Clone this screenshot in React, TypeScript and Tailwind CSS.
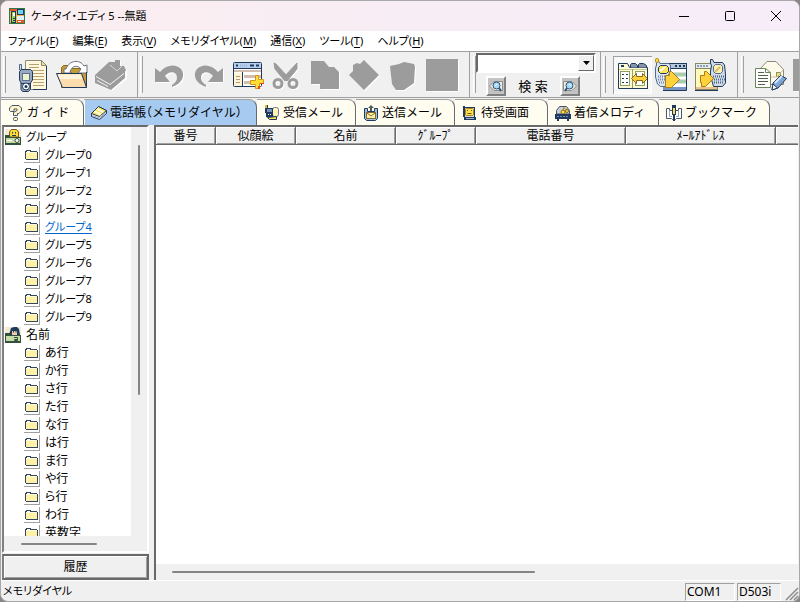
import type { ReactNode } from "react";

const navy = "#1f3a5c";

/* ---------- toolbar icons (39 x 38 canvas) ---------- */

const Tool = ({ children }: { children: ReactNode }) => (
  <svg viewBox="0 0 39 38" className="h-[38px] w-[39px]" aria-hidden="true">
    {children}
  </svg>
);

const PhoneDocIcon = () => (
  <Tool>
    <path d="M12.500 4.500H28.500L33.500 9.500V33.500H12.500Z" fill="#fff8dc" stroke="#8c8c6c" />
    <path d="M28.500 4.500V9.500H33.500Z" fill="#e9dcae" stroke="#8c8c6c" />
    <path d="M33.500 10V33.500H20" fill="none" stroke={navy} />
    <path d="M16 8.500H26M16 11.500H26M18 14.500H31M20 17.500H31M20 20.500H31M20 23.500H31M20 26.500H31M20 29.500H31" stroke="#b8a070" />
    <path d="M6.500 8.500H8.500V14H6.500Z" fill="#d8dce4" stroke="#50698c" />
    <path d="M6.500 15.500L8.500 13.500H17.500L19.500 15.500V24L17.500 27V33.500L15.500 35.500H9.500L8 33.500V27L6.500 24Z" fill="#98a8c0" stroke={navy} />
    <rect x="9.500" y="17.500" width="7" height="7" fill="#eaf4d0" stroke="#60708c" />
    <circle cx="13" cy="30.500" r="3.500" fill="#fff" stroke={navy} />
    <circle cx="13" cy="30.500" r="1.500" fill={navy} />
    <path d="M8 27.500H11M15 27.500H18" stroke={navy} />
  </Tool>
);

const OpenFolderIcon = () => (
  <Tool>
    <path d="M9.500 22V11.500L11.500 9.500H17.500L19.500 12.500H34.500V30.500L32.500 31.500H9.500Z" fill="#c79b35" stroke="#8a6a1c" />
    <path d="M14 13C17 4 28 3 32 10L35 9V17H26L29 13C26 9 20 9 18 16L20 17H12V13Z" fill="#fff" stroke="#6b7380" />
    <path d="M4.500 17.500H29.500L34.500 31.500H10.500Z" fill="#ffdcae" stroke={navy} />
    <path d="M6 18.500H28.500L30 23H8Z" fill="#fff4dc" />
    <path d="M34.500 16V31.500" stroke={navy} />
  </Tool>
);

const BookGrayIcon = () => (
  <Tool>
    <path d="M4 19L18 6H24V4H29V10H33L35 14V22L20 34L4 27Z" fill="#fff" transform="translate(1 1)" />
    <path d="M4 19L18 6H24V4H29V10H33L35 14L34 16V22L20 34L4 27Z" fill="#9c9c9c" />
    <path d="M5 20.500L19 28.500L33 17.500M6 24.500L17 30.500" fill="none" stroke="#f5f5f5" />
    <path d="M19 9L26 15L32 9" fill="none" stroke="#d8d8d8" />
  </Tool>
);

const undoShape = "M5 12L10 16C17 8 26 8 31 13C36 19 32 28 22 31V29C27 26 28 22 26 18C23 15 18 16 15 20L20 26H5Z";

const UndoIcon = () => (
  <Tool>
    <path d={undoShape} fill="#fff" transform="translate(1 1)" />
    <path d={undoShape} fill="#9c9c9c" />
  </Tool>
);

const RedoIcon = () => (
  <Tool>
    <path d={undoShape} fill="#fff" transform="matrix(-1 0 0 1 40 1)" />
    <path d={undoShape} fill="#9c9c9c" transform="matrix(-1 0 0 1 39 0)" />
  </Tool>
);

const AddTableIcon = () => (
  <Tool>
    <rect x="5.500" y="6.500" width="28" height="24" rx="1" fill="#fff" stroke={navy} />
    <rect x="6" y="7" width="27" height="5" fill="#b9cfea" />
    <path d="M8 9.500H10M22 9.500H26M28 9.500H31" stroke={navy} strokeWidth="2" />
    <path d="M12 9.500H20" stroke="#8fb4e0" strokeDasharray="1 1" strokeWidth="2" />
    <path d="M6 12.500H33" stroke={navy} />
    <path d="M6 15H33" stroke="#d3bdae" strokeWidth="2" />
    <rect x="6" y="17" width="8" height="13" fill="#fff3d2" />
    <path d="M14.500 16V30" stroke={navy} />
    <path d="M8 20.500H12M8 23.500H12M8 26.500H12" stroke="#ad9882" />
    <path d="M16 20.500H33M16 26.500H22" stroke="#d3bdae" strokeWidth="3" />
    <path d="M27.500 19.500H30.500V23.500H35.500V27.500H31.500V32.500H27.500V28.500H22.500V24.500H27.500Z" fill="#ffe033" stroke="#d9921a" />
    <path d="M32 27H36V28H32ZM30 30H32V33H30Z" fill="#e84a20" />
  </Tool>
);

const CutIcon = () => (
  <Tool>
    {["#fff", "#9c9c9c"].map((c, i) => (
      <g key={c} transform={i ? undefined : "translate(1 1)"} fill={c} stroke={c}>
        <path d="M7 7L9 8L22 22L18 25L8 13ZM30 7V13L20 25L16 22Z" />
        <circle cx="11" cy="27.500" r="4" fill="none" strokeWidth="3" />
        <circle cx="26" cy="27.500" r="4" fill="none" strokeWidth="3" />
      </g>
    ))}
  </Tool>
);

const CopyIcon = () => (
  <Tool>
    <path d="M5 5H18L23 11H28L33 16V33H14V28H5Z" fill="#fff" transform="translate(1 1)" />
    <path d="M5 5H18L23 11H28L33 16V33H14V28H5Z" fill="#9c9c9c" />
  </Tool>
);

const PasteIcon = () => (
  <Tool>
    <path d="M4 19L8 15V9L12 7L15 8L19 4L34 19L19 34Z" fill="#fff" transform="translate(1 1)" />
    <path d="M4 19L8 15V9L12 7L15 8L19 4L34 19L19 34Z" fill="#9c9c9c" />
  </Tool>
);

const TrashIcon = () => (
  <Tool>
    <path d="M6 10L15 8L20 6L30 8L31 11L30 27L20 34H12L8 28Z" fill="#fff" transform="translate(1 1)" />
    <path d="M6 10L15 8L20 6L30 8L31 11L30 27L20 34H12L8 28Z" fill="#9c9c9c" />
  </Tool>
);

const BlankIcon = () => (
  <Tool>
    <rect x="4" y="4" width="32" height="32" fill="#fff" />
    <rect x="3" y="3" width="32" height="32" fill="#9c9c9c" />
  </Tool>
);

const CompareIcon = () => (
  <Tool>
    <path d="M5.500 7.500H14.500L16.500 11.500H34.500V32.500H5.500Z" fill="#fffbd8" stroke={navy} />
    <path d="M17.500 11.500V8.500L18.500 7.500H22.500L24.500 9.500V11.500M25.500 11.500V8.500L26.500 7.500H30.500L33.500 9.500V11.500" fill="#8794a8" stroke={navy} />
    <path d="M8 10H11" stroke={navy} strokeWidth="2" />
    <path d="M6 13.500H34" stroke="#c6cf90" />
    <path d="M19.500 13V32" stroke="#91a05a" />
    <rect x="7.500" y="15.500" width="9" height="14" fill="#fff" stroke="#91a05a" />
    <path d="M9 18.500H11M13 18.500H15M9 22.500H11M13 22.500H15M9 26.500H11M13 26.500H15" stroke={navy} />
    <rect x="22.500" y="15.500" width="9" height="14" fill="#fff" stroke="#91a05a" />
    <path d="M18.500 22.500L23.500 17.500V20.500H29.500V17.500L34.500 22.500L29.500 27.500V24.500H23.500V27.500Z" fill="#ffd23c" stroke="#8c6818" />
    <path d="M6 32.500H34.500V14" fill="none" stroke={navy} />
  </Tool>
);

const PhoneToPcIcon = () => (
  <Tool>
    <rect x="13.500" y="7.500" width="21" height="26" fill="#fff" stroke={navy} />
    <path d="M17 8H34V12H17Z" fill="#b4c5da" />
    <path d="M23 10H25M27 10H29M31 10H33" stroke={navy} strokeWidth="2" />
    <path d="M18 12.500H34" stroke={navy} />
    <path d="M20 18.500H34M20 25.500H34" stroke="#a9cbb0" strokeWidth="4" />
    <path d="M11 31H34V34H11Z" fill="#7896c4" />
    <path d="M34.500 8V34.500H11" fill="none" stroke={navy} />
    <path d="M4.500 5V9L3.500 12V21L5.500 28L8.500 30.500H13.500L16.500 27V19L18.500 15V9L16.500 7.500H8L6.500 5Z" fill="#dbe4ef" stroke="#50698c" />
    <rect x="3.500" y="2.500" width="3" height="4" rx="1" fill="#ffd23c" stroke="#b08820" />
    <path d="M6.500 11.500L8.500 9.500H14.500L16.500 11.500V15.500L14.500 17.500H8.500L6.500 15.500Z" fill="#ffe352" stroke={navy} />
    <path d="M8 15L13 11" stroke="#fff" strokeWidth="2" />
    <path d="M6 20.500H15M6 23.500H15M7 26.500H14" stroke="#6e89b0" strokeWidth="2" strokeDasharray="1 1" />
    <path d="M13.500 19.500H17.500V15.500H19.500L27.500 23.500L19.500 31.500H17.500L13.500 31.500V27.500Z" fill="#ffd23c" stroke="#a87a1a" />
  </Tool>
);

const PcToPhoneIcon = () => (
  <Tool>
    <rect x="4.500" y="7.500" width="22" height="26" fill="#fff9bc" stroke="#8a8a60" />
    <path d="M5 8H22V12H5Z" fill="#e2ecf4" />
    <path d="M6 10H18" stroke="#8fa0a8" strokeWidth="2" strokeDasharray="2 1" />
    <path d="M5 12.500H22" stroke="#8a8a60" />
    <path d="M5 31H26V33H5Z" fill="#ecc08c" />
    <path d="M4 34.500H27" stroke={navy} />
    <path d="M21.500 3.500H19.500V7L20.500 10L19.500 15V20L22.500 30.500H31.500L34.500 27V18L33.500 9L31.500 6.500H23Z" fill="#cfd9e6" stroke={navy} />
    <path d="M22.500 10.500L24.500 8.500H29.500L31.500 10.500V15.500L29.500 17.500H24.500L22.500 15.500Z" fill="#fff0b0" stroke="#50698c" />
    <path d="M24 16L29 11" stroke="#d2bf70" strokeWidth="2" />
    <path d="M22 20.500H34M23 23.500H34M23 26.500H33" stroke="#50698c" strokeWidth="2" strokeDasharray="1 1" />
    <path d="M9.500 19.500H13.500V15.500H15.500L22.500 22.500L14.500 30.500H10.500V26.500H9.500Z" fill="#ffd23c" stroke="#a87a1a" />
  </Tool>
);

const MailEditIcon = () => (
  <Tool>
    <path d="M8.500 13.500L16 5.500H25L32.500 13.500V28.500H12Z" fill="#fffbea" stroke="#8a8a78" />
    <rect x="25.500" y="16.500" width="4" height="4" fill="#ffe352" stroke="#7e9870" />
    <path d="M20 21L26 21L32 14" fill="none" stroke="#d9b8a8" />
    <path d="M4.500 12.500H14.500L19.500 16.500V31.500H4.500Z" fill="#fff" stroke="#6b8458" />
    <path d="M14.500 12.500V16.500H19.500" fill="none" stroke="#6b8458" />
    <path d="M7 16.500H13M7 19.500H17M7 22.500H17M7 25.500H17M7 28.500H14" stroke="#52604a" />
    <path d="M22 27L29.500 19.500L35.500 22.500L27 32L21 34Z" fill="#7fa5d8" stroke={navy} />
    <path d="M24 27L31 20" stroke="#d4e6fa" strokeWidth="2" />
    <path d="M22 28L26.500 32L21 34Z" fill="#fff" stroke={navy} />
  </Tool>
);

/* ---------- small icons ---------- */

const AppIcon = () => (
  <svg viewBox="0 0 16 16" className="size-4" shapeRendering="crispEdges" aria-hidden="true">
    <path d="M0 0H16V16H0Z" fill="#2f7a45" />
    <path d="M1 1H15V15H1Z" fill="#f0b44c" />
    <path d="M1 1H8V3H1ZM8 12H15V15H8Z" fill="#e2542c" />
    <rect x="8.500" y="1.500" width="6" height="5" fill="#6cd4f0" stroke={navy} />
    <rect x="8" y="8" width="7" height="4" fill="#d7f4ff" />
    <path d="M9 13.500H12" stroke="#fff" />
    <rect x="2.500" y="3.500" width="4" height="11" fill="#9fd64c" stroke={navy} />
    <path d="M4 5H6V8H4Z" fill="#fff" />
    <path d="M4 10H6M4 12H6" stroke={navy} />
  </svg>
);

const Small = ({ children }: { children: ReactNode }) => (
  <svg viewBox="0 0 16 16" className="size-4 shrink-0" aria-hidden="true">
    {children}
  </svg>
);

const GuideIcon = () => (
  <Small>
    <path d="M1.500 5.500V3L4 .500H11L13.500 3V6L11 8.500H9.500V10.500H5.500V7.500L9 5.500V4H6V6.500H2.500Z" fill="#fff5c4" stroke="#46566c" />
    <rect x="5.500" y="12.500" width="4" height="3" rx="1" fill="#fff5c4" stroke="#46566c" />
  </Small>
);

const PhonebookIcon = () => (
  <Small>
    <path d="M.500 8.500L7.500 1.500L15.500 5.500V8.500L8.500 14.500L.500 11.500Z" fill="#fff" stroke={navy} />
    <path d="M.500 8.500L7.500 1.500L15.500 5.500L8.500 11.500Z" fill="#ffe14d" stroke={navy} />
    <path d="M3.500 6.500L10 9.500M6 4L12.500 7" stroke="#fffbe0" strokeWidth="2" />
    <path d="M1.500 10.500L8.500 13L15 7.500" fill="none" stroke="#8da2b8" />
  </Small>
);

const InboxIcon = () => (
  <Small>
    <rect x="8.500" y="2.500" width="6" height="9" rx="2" fill="#fff5b4" stroke="#6b7890" />
    <path d="M1 0H4V3H9V12H2V8H1Z" fill={navy} />
    <rect x="1" y="0" width="2" height="3" fill="#e4b52c" />
    <path d="M3 4H8V7H3Z" fill="#7890b4" />
    <path d="M4 9.500H5M6 9.500H7" stroke="#fff" />
    <path d="M3.500 12.500L12.500 11.500V14.500H5.500Z" fill="#ffe14d" stroke={navy} />
  </Small>
);

const OutboxIcon = () => (
  <Small>
    <path d="M1.500 3.500H4.500V6.500H11.500V3.500H14.500V13.500L12.500 15.500H3.500L1.500 13.500Z" fill="#a4c0e0" stroke={navy} />
    <rect x="3.500" y="7.500" width="9" height="6" fill="#fff0a0" stroke="#806c30" />
    <path d="M4 8L8 11L12 8" fill="none" stroke="#806c30" />
    <path d="M8 0L11 3H9V6H7V3H5Z" fill="#4d5c50" />
  </Small>
);

const ScreenIcon = () => (
  <Small>
    <path d="M1 1H3V2H13V12H14V15H2V12H1Z" fill={navy} />
    <path d="M3 3H12V12H3Z" fill="#d6deea" />
    <rect x="3.500" y="3.500" width="8" height="7" rx="1" fill="#ffe14d" stroke="#a8801c" />
    <path d="M5.500 5V6M9.500 5V6M5.500 8.500H9.500" stroke="#6b5210" />
    <path d="M4 13.500H12" stroke="#9fb2cc" />
  </Small>
);

const MelodyIcon = () => (
  <Small>
    <path d="M1.500 9V5.500L4.500 1.500H11.500L14.500 5.500V9Z" fill="#c8cfd8" stroke="#46566c" />
    <path d="M8.500 8V2.500L13.500 6" stroke="#b8941c" fill="none" />
    <circle cx="8" cy="7" r="2" fill="#ffe14d" stroke="#8a6c14" />
    <circle cx="12" cy="6" r="1.500" fill="#ffe14d" stroke="#8a6c14" />
    <path d="M0 9H16V14H14V16H12V14H4V16H2V14H0Z" fill={navy} />
    <path d="M2 11.500H14" stroke="#7890b4" strokeDasharray="2 1" />
  </Small>
);

const BookmarkIcon = () => (
  <Small>
    <path d="M6 5.500H3.500V3.500H.500V13.500H5.500L6.500 14.500H9.500L10.500 13.500H15.500V3.500H12.500V5.500H10Z" fill="#fff" stroke="#46566c" />
    <path d="M3.500 5.500V11.500H6M12.500 5.500V11.500H10" fill="none" stroke="#8da2b8" />
    <rect x="6.500" y="1.500" width="3" height="8" fill="#ffe14d" stroke={navy} />
    <path d="M6 0H10V3H6Z" fill={navy} />
    <path d="M8 10V16" stroke={navy} strokeWidth="2" />
  </Small>
);

const FolderIcon = () => (
  <span className="flex size-4 shrink-0 items-center justify-center border-r border-b border-[#a0a0a0]">
    <svg viewBox="0 0 15 15" className="size-[15px]" shapeRendering="crispEdges" aria-hidden="true">
      <path d="M1 12V4H2V3H7V4H13V5H14V13H2V12Z" fill="#33475c" />
      <path d="M2 5H13V12H2Z" fill="#fff2a8" />
      <path d="M3 4H6V5H3Z" fill="#fffbe0" />
      <path d="M2 5.500H12" stroke="#fffbe0" />
    </svg>
  </span>
);

const GroupRootIcon = () => (
  <Small>
    <path d="M0 0H16V9H0Z" fill="#f4ead2" />
    <path d="M4.500 8V3L6.500 .500H11.500L13.500 3V8Z" fill="#ffd935" stroke="#6e5a10" />
    <path d="M7.500 3V4.500M10.500 3V4.500M7 6.500H11" stroke={navy} />
    <path d="M0 6H5V8H16V16H0Z" fill="#33503c" />
    <path d="M1 9H15V14H1Z" fill="#c8dca8" />
    <circle cx="12" cy="11.500" r="2" fill="#fff" stroke="#33503c" />
    <path d="M2 11.500H7" stroke="#fff" />
  </Small>
);

const NameRootIcon = () => (
  <Small>
    <path d="M0 0H16V9H0Z" fill="#f4ead2" />
    <path d="M4 8L6 1L9 0H12L14 2L15 8Z" fill={navy} />
    <path d="M7 4H12V8H7Z" fill="#f5cfa8" />
    <path d="M8.500 4V5.500M11 4V5.500" stroke={navy} />
    <path d="M0 6H5V8H16V16H0Z" fill="#33503c" />
    <path d="M1 9H15V14H1Z" fill="#c8dca8" />
    <path d="M9 10.500H12.500V13.500H9.500V12.500H12" fill="none" stroke="#33503c" />
  </Small>
);

const SearchArrowIcon = ({ forward = false }: { forward?: boolean }) => (
  <svg viewBox="0 0 16 16" className="size-4 bg-[#c3c3c3]" aria-hidden="true">
    <g transform={forward ? "matrix(-1 0 0 1 16 0)" : undefined}>
      <path d="M1.500 8L6 3.500H14.500V12.500H6Z" fill="#f1ead8" stroke="#8d8d8d" />
      <path d="M11 10L13 13" stroke="#2b527d" strokeWidth="2" />
      <circle cx="8.500" cy="7.500" r="3.500" fill="#a6dcf8" stroke="#2b527d" />
      <path d="M7 8L9 6" stroke="#fff" />
    </g>
  </svg>
);

/* ---------- data ---------- */

const menus = [
  { label: "ファイル", accel: "F" },
  { label: "編集", accel: "E" },
  { label: "表示", accel: "V" },
  { label: "メモリダイヤル", accel: "M" },
  { label: "通信", accel: "X" },
  { label: "ツール", accel: "T" },
  { label: "ヘルプ", accel: "H" },
];

const fileTools = [
  { name: "携帯電話", icon: <PhoneDocIcon /> },
  { name: "開く", icon: <OpenFolderIcon /> },
  { name: "保存", icon: <BookGrayIcon /> },
];

const editTools = [
  { name: "元に戻す", icon: <UndoIcon /> },
  { name: "やり直し", icon: <RedoIcon /> },
  { name: "新規追加", icon: <AddTableIcon /> },
  { name: "切り取り", icon: <CutIcon /> },
  { name: "コピー", icon: <CopyIcon /> },
  { name: "貼り付け", icon: <PasteIcon /> },
  { name: "削除", icon: <TrashIcon /> },
  { name: "空白", icon: <BlankIcon /> },
];

const transferTools = [
  { name: "比較", icon: <CompareIcon />, pressed: true },
  { name: "読み込み", icon: <PhoneToPcIcon /> },
  { name: "書き込み", icon: <PcToPhoneIcon /> },
];

const mailTools = [
  { name: "メール編集", icon: <MailEditIcon /> },
  { name: "その他", icon: <BlankIcon /> },
];

const tabs = [
  { label: "ガ イ ド", icon: <GuideIcon />, width: "w-[83px]" },
  { label: "電話帳（メモリダイヤル）", icon: <PhonebookIcon />, width: "w-[173px]", active: true },
  { label: "受信メール", icon: <InboxIcon />, width: "w-[99px]" },
  { label: "送信メール", icon: <OutboxIcon />, width: "w-[99px]" },
  { label: "待受画面", icon: <ScreenIcon />, width: "w-[93px]" },
  { label: "着信メロディ", icon: <MelodyIcon />, width: "w-[111px]" },
  { label: "ブックマーク", icon: <BookmarkIcon />, width: "w-[111px]" },
];

const tree = [
  {
    label: "グループ",
    icon: <GroupRootIcon />,
    text: "text-[11px]",
    items: ["グループ0", "グループ1", "グループ2", "グループ3", "グループ4", "グループ5", "グループ6", "グループ7", "グループ8", "グループ9"],
  },
  {
    label: "名前",
    icon: <NameRootIcon />,
    text: "text-xs",
    items: ["あ行", "か行", "さ行", "た行", "な行", "は行", "ま行", "や行", "ら行", "わ行", "英数字"],
  },
];

const columns = [
  { label: "番号", width: "w-[60px]" },
  { label: "似顔絵", width: "w-[80px]" },
  { label: "名前", width: "w-[100px]" },
  { label: "ｸﾞﾙｰﾌﾟ", width: "w-[80px]" },
  { label: "電話番号", width: "w-[150px]" },
  { label: "ﾒｰﾙｱﾄﾞﾚｽ", width: "w-[150px]" },
];

/* ---------- toolbar ---------- */

const Grip = () => <span className="my-1 w-[3px] shrink-0 border-r border-l border-r-[#a0a0a0] border-l-white" />;

type ToolItem = { name: string; icon: ReactNode; pressed?: boolean };

const ToolGroup = ({ tools, last = false }: { tools: ToolItem[]; last?: boolean }) => (
  <div className={last ? "flex min-w-0 flex-1 overflow-hidden pl-[3px]" : "flex shrink-0 border-r border-[#a0a0a0] pr-[7px] pl-[2px]"}>
    <Grip />
    <div className="ml-[7px] flex items-center">
      {tools.map((tool) => (
        <button
          key={tool.name}
          type="button"
          aria-label={tool.name}
          className={
            tool.pressed
              ? "bg-[#f8f8f8] shadow-[inset_1px_1px_0_#a0a0a0,inset_-1px_-1px_0_#fff]"
              : ""
          }
        >
          {tool.icon}
        </button>
      ))}
    </div>
  </div>
);

const SearchGroup = () => (
  <div className="flex shrink-0 border-r border-[#a0a0a0] pr-1 pl-[3px]">
    <Grip />
    <div className="flex w-[120px] flex-col justify-between py-[1px]">
      <div className="flex h-5 border-2 border-t-[#696969] border-r-white border-b-white border-l-[#696969] bg-white">
        <input type="text" aria-label="検索文字列" className="min-w-0 flex-1 bg-white px-1 outline-none" />
        <button
          type="button"
          aria-label="履歴を開く"
          className="flex w-4 items-center justify-center border border-t-white border-r-[#696969] border-b-[#696969] border-l-white bg-[#f0f0f0]"
        >
          <svg viewBox="0 0 7 4" className="h-1 w-[7px]" aria-hidden="true">
            <path d="M0 0H7L3.500 4Z" fill="#000" />
          </svg>
        </button>
      </div>
      <div className="flex items-center justify-between pr-4 pl-[10px]">
        <button type="button" aria-label="前を検索" className="border-2 border-t-white border-r-[#808080] border-b-[#808080] border-l-white">
          <SearchArrowIcon />
        </button>
        <span className="text-[13px] leading-5">検 索</span>
        <button type="button" aria-label="次を検索" className="border-2 border-t-white border-r-[#808080] border-b-[#808080] border-l-white">
          <SearchArrowIcon forward />
        </button>
      </div>
    </div>
  </div>
);

/* ---------- window ---------- */

const TitleBar = () => (
  <header className="flex h-[30px] shrink-0 items-center bg-linear-to-r from-[#fbeef0] via-[#f7edf4] to-[#f6edf9] pl-2">
    <AppIcon />
    <h1 className="ml-1.5 flex-1 text-[11px] [font-feature-settings:'palt']">ケータイ・エディ 5 --無題</h1>
    <button type="button" aria-label="最小化" className="flex h-full w-[46px] items-center justify-center">
      <svg viewBox="0 0 10 10" className="size-[10px]" aria-hidden="true">
        <path d="M0 5.500H10" stroke="#000" />
      </svg>
    </button>
    <button type="button" aria-label="最大化" className="flex h-full w-[46px] items-center justify-center">
      <svg viewBox="0 0 10 10" className="size-[10px]" aria-hidden="true">
        <rect x=".500" y=".500" width="9" height="9" rx="1" fill="none" stroke="#000" />
      </svg>
    </button>
    <button type="button" aria-label="閉じる" className="flex h-full w-[46px] items-center justify-center">
      <svg viewBox="0 0 10 10" className="size-[10px]" aria-hidden="true">
        <path d="M0 0L10 10M10 0L0 10" stroke="#000" />
      </svg>
    </button>
  </header>
);

const MenuBar = () => (
  <nav className="flex h-5 shrink-0 items-center gap-[14px] bg-white pl-[7px] text-[11px] [font-feature-settings:'palt']">
    {menus.map((menu) => (
      <button key={menu.accel} type="button" className="whitespace-nowrap">
        {menu.label}(<span className="underline underline-offset-2">{menu.accel}</span>)
      </button>
    ))}
  </nav>
);

const TabBar = () => (
  <div role="tablist" className="flex h-[27px] shrink-0 pt-[1px]">
    {tabs.map((tab) => (
      <button
        key={tab.label}
        type="button"
        role="tab"
        aria-selected={!!tab.active}
        className={`${tab.width} ${
          tab.active ? "bg-[#a6caf0]" : "bg-[#fffcf0]"
        } flex shrink-0 items-center gap-[3px] rounded-tr-lg border-t border-r border-t-[#a0a0a0] border-r-[#696969] pl-[7px] whitespace-nowrap shadow-[inset_1px_0_0_#fff] [font-feature-settings:'halt']`}
      >
        {tab.icon}
        {tab.label}
      </button>
    ))}
  </div>
);

const Sidebar = () => (
  <aside className="flex w-[147px] shrink-0 flex-col gap-[1px]">
    <div className="flex min-h-0 flex-1 flex-col border-2 border-t-[#696969] border-r-white border-b-white border-l-[#808080]">
      <div className="flex min-h-0 flex-1">
        <ul className="min-w-0 flex-1 overflow-hidden bg-white pt-[1px] pl-[1px] [font-feature-settings:'palt']">
          {tree.map((node) => (
            <li key={node.label} className={node.text}>
              <button type="button" className="flex h-[18px] items-center gap-[5px]">
                {node.icon}
                {node.label}
              </button>
              <ul className="pl-[19px]">
                {node.items.map((item) => (
                  <li key={item} className="h-[18px]">
                    <a
                      href="#"
                      className={
                        item === "グループ4"
                          ? "flex h-[18px] items-center gap-[5px] text-[#0066cc] underline underline-offset-2"
                          : "flex h-[18px] items-center gap-[5px]"
                      }
                    >
                      <FolderIcon />
                      {item}
                    </a>
                  </li>
                ))}
              </ul>
            </li>
          ))}
        </ul>
        <div className="flex w-4 shrink-0 justify-center pt-[18px]">
          <span className="h-[64%] w-0.5 rounded-full bg-[#858585]" />
        </div>
      </div>
      <div className="flex h-[15px] shrink-0 items-center pl-[17px]">
        <span className="h-0.5 w-3/5 rounded-full bg-[#858585]" />
      </div>
    </div>
    <button
      type="button"
      className="h-[26px] shrink-0 border-2 border-t-[#696969] border-r-[#696969] border-b-[#696969] border-l-[#808080] bg-[#f0f0f0] shadow-[inset_1px_1px_0_#fff,inset_-1px_-1px_0_#a0a0a0]"
    >
      履歴
    </button>
  </aside>
);

const AddressTable = () => (
  <main className="flex min-w-0 flex-1 flex-col border-t-2 border-l-2 border-t-[#696969] border-l-[#696969]">
    <div className="min-h-0 flex-1 overflow-hidden bg-white">
      <table className="w-full table-fixed border-separate border-spacing-0">
        <thead>
          <tr>
            {columns.map((col) => (
              <th
                key={col.label}
                scope="col"
                className={`${col.width} h-[18px] border-r border-b border-[#696969] bg-[#f0f0f0] p-0 font-normal shadow-[inset_1px_1px_0_#fff,inset_-1px_-1px_0_#a0a0a0]`}
              >
                {col.label}
              </th>
            ))}
            <td className="h-[18px] border-b border-[#696969] bg-[#f0f0f0] p-0 shadow-[inset_1px_1px_0_#fff,inset_0_-1px_0_#a0a0a0]" />
          </tr>
        </thead>
      </table>
    </div>
    <div className="flex h-4 shrink-0 items-center pl-4">
      <span className="h-0.5 w-[58%] rounded-full bg-[#858585]" />
    </div>
  </main>
);

const StatusBar = () => (
  <footer className="flex h-[21px] shrink-0 items-stretch gap-[2px] border-t border-white">
    <span className="flex-1 pl-[2px] text-[11px] leading-5 [font-feature-settings:'palt']">メモリダイヤル</span>
    <span className="mt-[2px] w-[50px] border border-t-[#a0a0a0] border-r-white border-b-white border-l-[#a0a0a0] pl-[1px] leading-4">COM1</span>
    <span className="mt-[2px] w-11 border border-t-[#a0a0a0] border-r-white border-b-white border-l-[#a0a0a0] pl-[1px] leading-4">D503i</span>
    <svg viewBox="0 0 14 14" className="ml-[2px] size-[14px] self-end" aria-hidden="true">
      <path d="M1 13L13 1M5 13L13 5M9 13L13 9" stroke="#8c8c8c" strokeWidth="1.500" />
    </svg>
  </footer>
);

export default function App() {
  return (
    <div className="h-screen bg-[#8c8488]">
      <div className="flex h-full flex-col overflow-hidden rounded-lg border border-[#a8a8a8] bg-[#f0f0f0] text-xs text-black [font-family:'Noto_Sans','Noto_Sans_CJK_JP',sans-serif]">
        <TitleBar />
        <MenuBar />
        <div className="flex h-[47px] shrink-0 overflow-hidden border-t border-b border-[#a0a0a0]">
          <ToolGroup tools={fileTools} />
          <ToolGroup tools={editTools} />
          <SearchGroup />
          <ToolGroup tools={transferTools} />
          <ToolGroup tools={mailTools} last />
        </div>
        <TabBar />
        <div className="flex min-h-0 flex-1 gap-[5px] px-[1px]">
          <Sidebar />
          <AddressTable />
        </div>
        <StatusBar />
      </div>
    </div>
  );
}
